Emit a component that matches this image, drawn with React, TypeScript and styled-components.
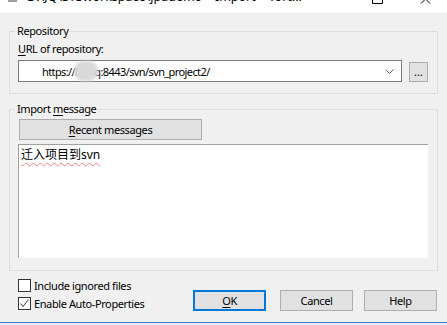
import styled, { createGlobalStyle } from "styled-components";

const GlobalStyle = createGlobalStyle`
  html, body {
    margin: 0;
    padding: 0;
    background: #f0f0f0;
  }
  body {
    font-family: "Noto Sans", "Noto Sans CJK SC", sans-serif;
    font-size: 11px;
    letter-spacing: -0.4px;
    color: #000;
  }
`;

const Window = styled.div`
  width: 447px;
  height: 325px;
  display: flex;
  flex-direction: column;
  overflow: hidden;
  background: #f0f0f0;
`;

const TitleBar = styled.div`
  height: 13px;
  flex: none;
  background: #fff;
  display: flex;
  align-items: flex-start;
  overflow: hidden;
`;

const TitleIcon = styled.svg`
  margin-left: 8px;
  flex: none;
`;

const TitleText = styled.div`
  margin-left: 10px;
  margin-top: -11px;
  line-height: 16px;
  font-size: 12.5px;
  letter-spacing: 0;
  white-space: nowrap;
`;

const Spacer = styled.div`
  flex: 1;
`;

const CaptionIcon = styled.svg<{ $gap: number }>`
  flex: none;
  margin-right: ${(p) => p.$gap}px;
`;

const Content = styled.div`
  padding: 0 9px;
  display: flex;
  flex-direction: column;
`;

const Group = styled.fieldset<{ $top: number; $pt: number; $pb: number }>`
  margin: ${(p) => p.$top}px 0 0 0;
  padding: ${(p) => p.$pt}px 9px ${(p) => p.$pb}px 8px;
  border: 1px solid #dcdcdc;
  min-width: 0;
  display: flex;
  flex-direction: column;
`;

const Legend = styled.legend`
  padding: 0 2px;
  margin-left: -3px;
  line-height: 14px;
`;

const Label = styled.div`
  line-height: 14px;
`;

const Key = styled.span`
  text-decoration: underline;
  text-underline-offset: 2px;
`;

const UrlRow = styled.div`
  margin-top: 4px;
  display: flex;
  align-items: flex-end;
  gap: 7px;
`;

const Combo = styled.div`
  width: 384px;
  height: 22px;
  box-sizing: border-box;
  border: 1px solid #7a7a7a;
  background: #fff;
  display: flex;
  align-items: center;
  padding-left: 23px;
  padding-right: 7px;
`;

const ComboText = styled.div`
  flex: 1;
  white-space: nowrap;
  display: flex;
  align-items: center;
  letter-spacing: -0.6px;
`;

const Blur = styled.span`
  display: inline-block;
  width: 24px;
  height: 20px;
  margin: 0 -4px 0 -3px;
  border-radius: 9px;
  background: #d9d9d9;
  filter: blur(1.5px);
`;

const BrowseButton = styled.div`
  width: 19px;
  height: 20px;
  box-sizing: border-box;
  border: 1px solid #adadad;
  background: #e1e1e1;
  display: flex;
  align-items: flex-end;
  justify-content: center;
  line-height: 14px;
  letter-spacing: 0;
  padding-bottom: 2px;
`;

const Button = styled.div<{ $width: number; $focused?: boolean }>`
  width: ${(p) => p.$width}px;
  height: 21px;
  box-sizing: border-box;
  border: ${(p) => (p.$focused ? "2px solid #0078d7" : "1px solid #adadad")};
  background: #e1e1e1;
  display: flex;
  align-items: center;
  justify-content: center;
  line-height: 14px;
  flex: none;
`;

const RecentButton = styled(Button)`
  margin-left: 1px;
`;

const MessageArea = styled.div`
  margin-top: 4px;
  width: 410px;
  height: 114px;
  box-sizing: border-box;
  background: #fff;
  border-top: 1px solid #a0a0a0;
  border-left: 1px solid #a0a0a0;
  padding: 2px 2px;
  line-height: 16px;
  font-size: 12px;
  letter-spacing: 0;
`;

const Squiggly = styled.span`
  text-decoration: underline wavy #f08080;
  text-decoration-thickness: 1px;
  text-underline-offset: 3px;
`;

const Footer = styled.div`
  display: flex;
  align-items: flex-end;
  padding-left: 18px;
  margin-top: 8px;
`;

const Checks = styled.div`
  display: flex;
  flex-direction: column;
  gap: 5px;
  width: 175px;
`;

const CheckRow = styled.div`
  display: flex;
  align-items: center;
  gap: 3px;
  height: 13px;
  line-height: 14px;
`;

const Box = styled.div`
  width: 13px;
  height: 13px;
  box-sizing: border-box;
  border: 1px solid #333;
  background: #fff;
  display: flex;
  align-items: center;
  justify-content: center;
`;

const Actions = styled.div`
  display: flex;
  align-items: center;
  margin-bottom: -1px;
`;

const Gap = styled.div<{ $w: number }>`
  width: ${(p) => p.$w}px;
`;

const BottomEdge = styled.div`
  margin-top: auto;
  height: 2px;
  border-top: 1px solid #3b7fc9;
  background: #e4ebf3;
  flex: none;
`;

export default function App() {
  return (
    <Window>
      <GlobalStyle />
      <TitleBar>
        <TitleIcon width="9" height="3" viewBox="0 0 9 3">
          <rect x="0" y="0" width="9" height="2" fill="#9aa0a8" />
        </TitleIcon>
        <TitleText>D:\JQ\STSworkspace\jpademo – Import – Tort...</TitleText>
        <Spacer />
        <CaptionIcon $gap={37} width="11" height="4" viewBox="0 0 11 4">
          <path d="M0.5 0 V3.5 H10.5 V0" fill="none" stroke="#000" strokeWidth="1" />
        </CaptionIcon>
        <CaptionIcon $gap={16} width="11" height="4" viewBox="0 0 11 4">
          <path d="M1 3.5 L4.5 0 M10 3.5 L6.5 0" fill="none" stroke="#000" strokeWidth="1" />
        </CaptionIcon>
      </TitleBar>
      <Content>
        <Group $top={11} $pt={4} $pb={11}>
          <Legend>Repository</Legend>
          <Label>
            <Key>U</Key>RL of repository:
          </Label>
          <UrlRow>
            <Combo>
              <ComboText>
                https://l<Blur />q:8443/svn/svn_project2/
              </ComboText>
              <svg width="9" height="5" viewBox="0 0 9 5">
                <path d="M0.5 0.5 L4.5 4.5 L8.5 0.5" fill="none" stroke="#606060" strokeWidth="1" />
              </svg>
            </Combo>
            <BrowseButton>...</BrowseButton>
          </UrlRow>
        </Group>
        <Group $top={8} $pt={3} $pb={12}>
          <Legend>
            Import <Key>m</Key>essage
          </Legend>
          <RecentButton $width={183}>
            <Key>R</Key>ecent messages
          </RecentButton>
          <MessageArea>
            <Squiggly>迁入项目到svn</Squiggly>
          </MessageArea>
        </Group>
      </Content>
      <Footer>
        <Checks>
          <CheckRow>
            <Box />
            Include ignored files
          </CheckRow>
          <CheckRow>
            <Box>
              <svg width="11" height="11" viewBox="0 0 11 11">
                <path d="M1.5 5.5 L4 8.5 L9.5 1.5" fill="none" stroke="#555" strokeWidth="1.1" />
              </svg>
            </Box>
            Enable Auto-Properties
          </CheckRow>
        </Checks>
        <Actions>
          <Button $width={73} $focused>
            <Key>O</Key>K
          </Button>
          <Gap $w={14} />
          <Button $width={73}>Cancel</Button>
          <Gap $w={11} />
          <Button $width={73}>Help</Button>
        </Actions>
      </Footer>
      <BottomEdge />
    </Window>
  );
}
